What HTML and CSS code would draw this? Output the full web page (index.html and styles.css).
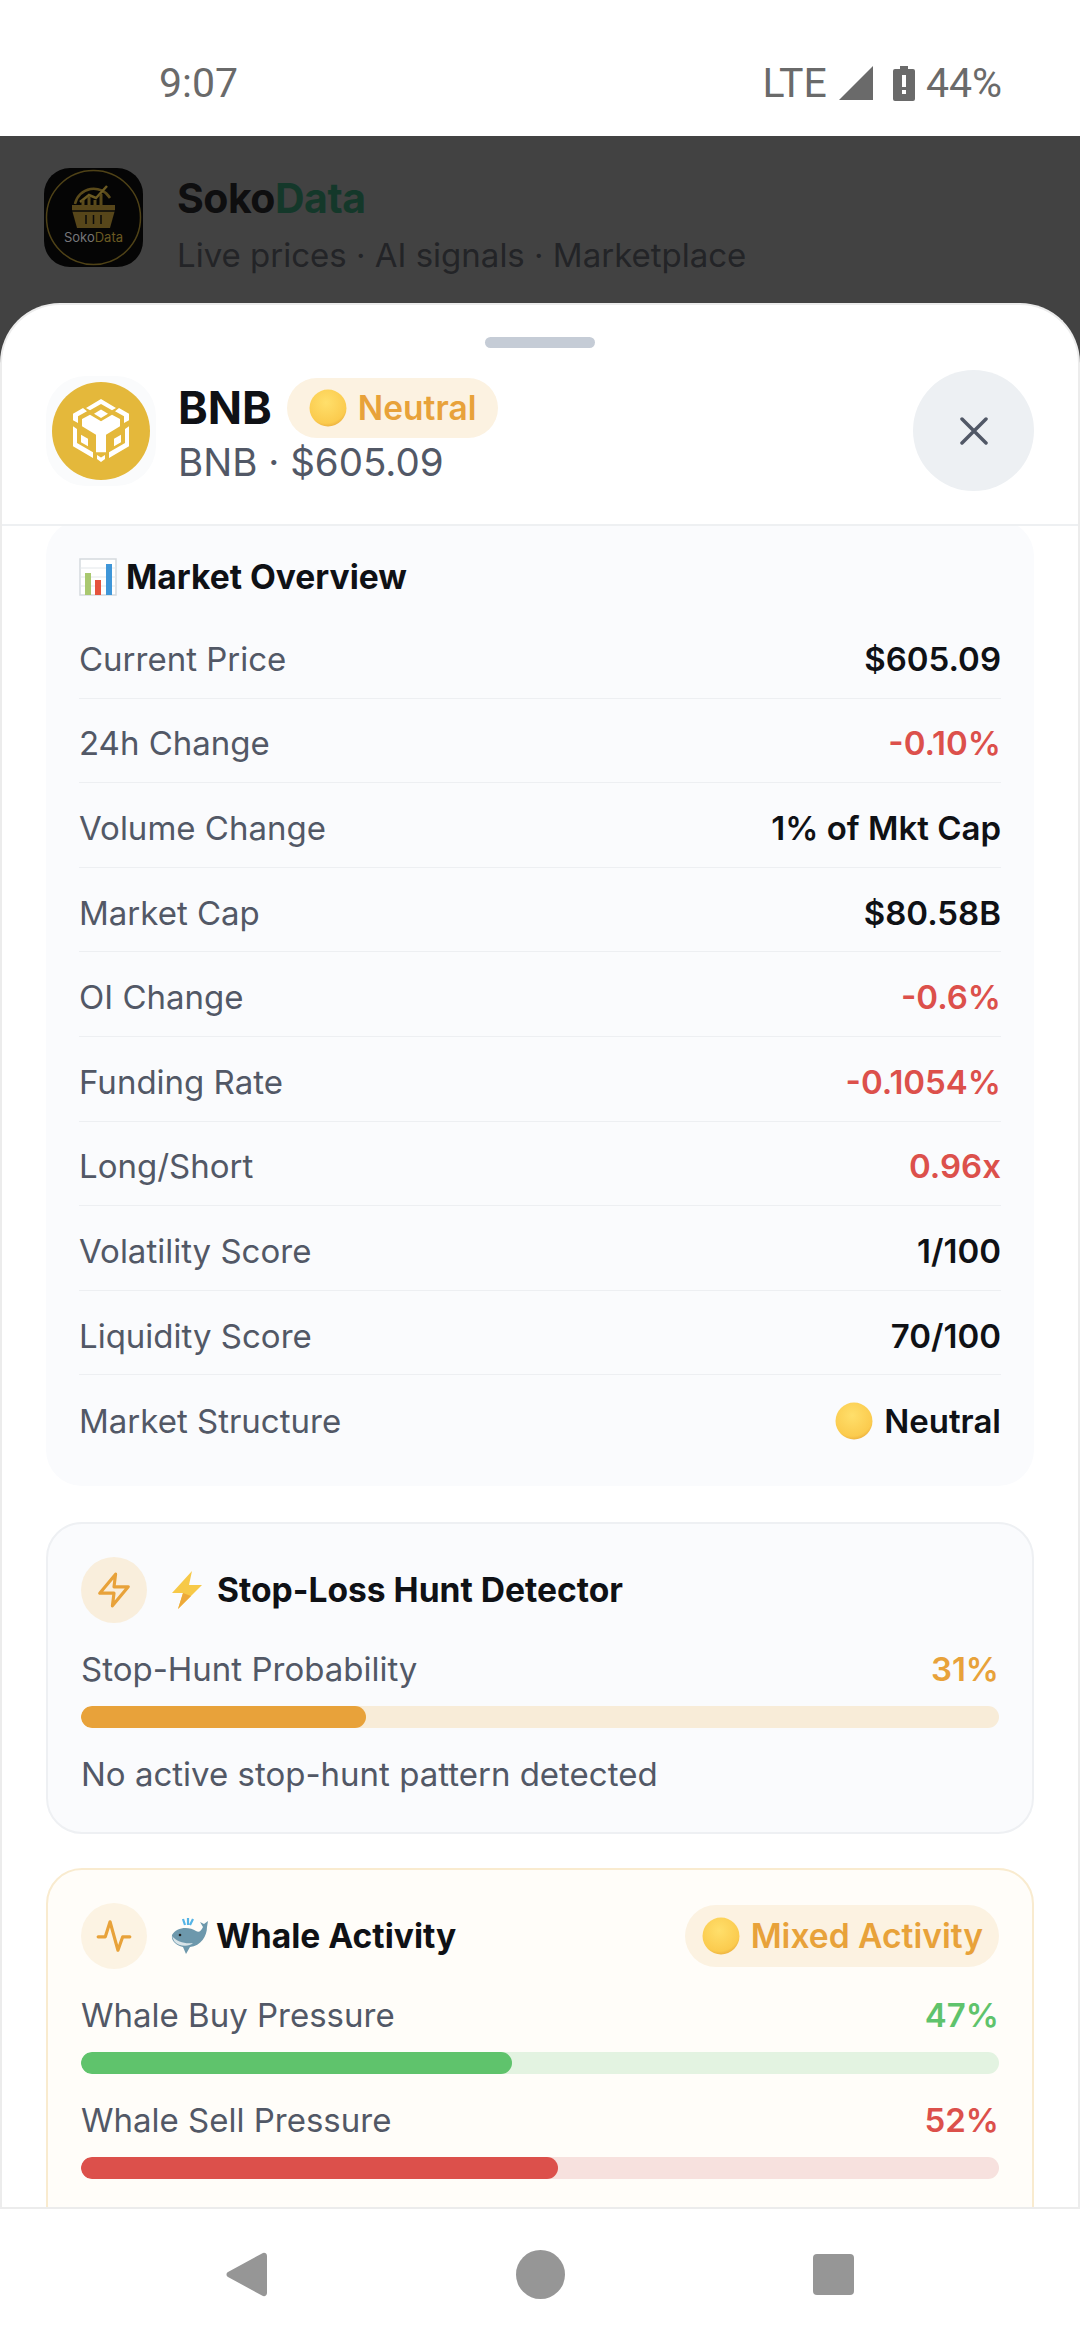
FILE: index.html
```html
<!DOCTYPE html>
<html lang="en">
<head>
    <meta charset="UTF-8">
    <meta name="viewport" content="width=device-width, initial-scale=1.0">
    <title>SokoData - BNB</title>
    <link rel="stylesheet" href="styles.css">
</head>
<body>

<svg class="defs" width="0" height="0">
    <defs>
        <radialGradient id="coinFill" cx="45%" cy="35%" r="70%">
            <stop offset="0" stop-color="#ffdf6b"/>
            <stop offset="0.8" stop-color="#fbcb4e"/>
            <stop offset="1" stop-color="#e8a93a"/>
        </radialGradient>
        <symbol id="yellowDot" viewBox="0 0 36 36">
            <circle cx="18" cy="18" r="17.5" fill="url(#coinFill)"/>
        </symbol>
    </defs>
</svg>

<div class="screen">

    <div class="status-bar">
        <span>9:07</span>
        <div class="status-right">
            <span>LTE</span>
            <svg class="signal" viewBox="0 0 34 34"><path d="M34 0V34H0Z"/></svg>
            <svg class="battery" viewBox="0 0 22 35"><path fill-rule="evenodd" d="M7 0H15V3H20A2 2 0 0 1 22 5V33A2 2 0 0 1 20 35H2A2 2 0 0 1 0 33V5A2 2 0 0 1 2 3H7ZM9 9V21H13V9ZM9 24V28H13V24Z"/></svg>
            <span>44%</span>
        </div>
    </div>

    <div class="backdrop">
        <div class="app-header">
            <svg class="app-logo" viewBox="0 0 99 99">
                <rect width="99" height="99" rx="26" fill="#050505"/>
                <circle cx="49.5" cy="49.5" r="47" fill="none" stroke="#4f4217" stroke-width="1.5"/>
                <path d="M31 36A19 19 0 0 1 66 30" fill="none" stroke="#5a4a1a" stroke-width="2.5"/>
                <path d="M36 34L45 27L52 30L63 18" fill="none" stroke="#6b5a22" stroke-width="2.5"/>
                <path d="M39 37V32M45 37V29M51 37V32M57 37V26" stroke="#5a4a1a" stroke-width="3"/>
                <path d="M28 37H71V42L66 60H33L28 42Z" fill="#57461a"/>
                <path d="M28 43H71M42 47V56M49.5 47V56M57 47V56" stroke="#0a0a0a" stroke-width="1.5"/>
                <text x="49.5" y="74" text-anchor="middle" class="logo-text">Soko<tspan fill="#6b5a22">Data</tspan></text>
            </svg>
            <div>
                <div class="app-title">Soko<span class="app-title-accent">Data</span></div>
                <div class="app-subtitle">Live prices · AI signals · Marketplace</div>
            </div>
        </div>

        <div class="sheet">
            <div class="sheet-top">
                <div class="handle"></div>
                <div class="coin-row">
                    <div class="coin-frame">
                        <svg class="coin" viewBox="0 0 98 98">
                            <circle cx="49" cy="49" r="49" fill="#e4b83b"/>
                            <g fill="#fff">
                                <path d="M49 17L64 26L60 28.3L49 22L38 28.3L34 26Z"/>
                                <path d="M49 27.5L56 31.7L49 36L42 31.7Z"/>
                                <path d="M21 31.7L31 26L35 29.3L26 34.3V41L21 38.3Z"/>
                                <path d="M77 31.7L67 26L63 29.3L72 34.3V41L77 38.3Z"/>
                                <path d="M30 37L38 32.7L49 39.3L60 32.7L68 37V44.3L54 52.7V70.3H44V52.7L30 44.3Z"/>
                                <path d="M21 44.3L25 47V61L41 70.3V76L21 64.3Z"/>
                                <path d="M77 44.3L73 47V61L57 70.3V76L77 64.3Z"/>
                                <path d="M29 52.7L36 56.7V64.3L29 60.3Z"/>
                                <path d="M69 52.7L62 56.7V64.3L69 60.3Z"/>
                                <path d="M45 73L49 75.5L53 73V77L49 80L45 77Z"/>
                            </g>
                        </svg>
                    </div>
                    <div class="coin-text">
                        <div class="coin-name-row">
                            <span class="coin-name">BNB</span>
                            <span class="pill pill-neutral"><svg class="dot"><use href="#yellowDot"/></svg>Neutral</span>
                        </div>
                        <div class="coin-sub">BNB · $605.09</div>
                    </div>
                    <button class="close-btn">
                        <svg viewBox="0 0 28 28"><path d="M2 2L26 26M26 2L2 26"/></svg>
                    </button>
                </div>
            </div>

            <div class="sheet-body">
                <section class="overview">
                    <h2 class="overview-title">
                        <svg class="emoji" viewBox="0 0 38 38">
                            <rect x="1" y="1" width="36" height="36" fill="#fff" stroke="#d5dade" stroke-width="1.5"/>
                            <path d="M1 10H37M1 19H37M1 28H37" stroke="#e3e7ea" stroke-width="1"/>
                            <rect x="6" y="15" width="6" height="22" fill="#a9c86f"/>
                            <rect x="16" y="22" width="6" height="15" fill="#e5533d"/>
                            <rect x="27" y="6" width="6" height="31" fill="#3f96d8"/>
                        </svg>
                        Market Overview
                    </h2>
                    <div class="row"><span>Current Price</span><b>$605.09</b></div>
                    <div class="row"><span>24h Change</span><b class="red">-0.10%</b></div>
                    <div class="row"><span>Volume Change</span><b>1% of Mkt Cap</b></div>
                    <div class="row"><span>Market Cap</span><b>$80.58B</b></div>
                    <div class="row"><span>OI Change</span><b class="red">-0.6%</b></div>
                    <div class="row"><span>Funding Rate</span><b class="red">-0.1054%</b></div>
                    <div class="row"><span>Long/Short</span><b class="red">0.96x</b></div>
                    <div class="row"><span>Volatility Score</span><b>1/100</b></div>
                    <div class="row"><span>Liquidity Score</span><b>70/100</b></div>
                    <div class="row"><span>Market Structure</span><b class="with-dot"><svg class="dot"><use href="#yellowDot"/></svg>Neutral</b></div>
                </section>

                <section class="card card-detector">
                    <div class="card-head">
                        <span class="icon-circle">
                            <svg viewBox="0 0 24 24"><path d="M13 2L3 14H12L11 22L21 10H12Z"/></svg>
                        </span>
                        <h2 class="card-title">
                            <svg class="emoji-bolt" viewBox="0 0 32 38"><path d="M21 0L1 22L12 22L7 38L31 14H18Z" fill="#f7c948"/><path d="M12 22L7 38L20 25Z" fill="#eda93a"/></svg>
                            Stop-Loss Hunt Detector
                        </h2>
                    </div>
                    <div class="meter-label"><span>Stop-Hunt Probability</span><b class="orange">31%</b></div>
                    <div class="bar bar-orange"><div class="fill" style="width: 31%"></div></div>
                    <p class="card-note">No active stop-hunt pattern detected</p>
                </section>

                <section class="card card-warm">
                    <div class="card-head">
                        <span class="icon-circle">
                            <svg viewBox="0 0 24 24"><path d="M2 12.5H6.5L9.5 3L14.5 21L17.5 12.5H22"/></svg>
                        </span>
                        <h2 class="card-title">
                            <svg class="emoji-whale" viewBox="0 0 38 36">
                                <path d="M12 1L14 7M17 0V7M22 1L19 7" stroke="#55b4e6" stroke-width="2.2" fill="none"/>
                                <path d="M1 17C5 9 18 8 25 13C28 15 30 13 32 9L29 4L33 6L37 3L36 9C36 18 30 28 19 29L15 36L12 29C5 27 0 23 1 17Z" fill="#6d98ac"/>
                                <path d="M1 18C6 24 14 26 22 25C18 29 8 29 3 23Z" fill="#d9e4e8"/>
                                <circle cx="9" cy="17" r="1.3" fill="#222"/>
                            </svg>
                            Whale Activity
                        </h2>
                        <span class="pill pill-mixed"><svg class="dot"><use href="#yellowDot"/></svg>Mixed Activity</span>
                    </div>
                    <div class="meter-label"><span>Whale Buy Pressure</span><b class="green">47%</b></div>
                    <div class="bar bar-green"><div class="fill" style="width: 47%"></div></div>
                    <div class="meter-label second"><span>Whale Sell Pressure</span><b class="red">52%</b></div>
                    <div class="bar bar-red"><div class="fill" style="width: 52%"></div></div>
                </section>
            </div>
        </div>
    </div>

    <div class="nav-bar">
        <svg class="nav-back" viewBox="0 0 41 45"><path d="M36 1.5C38 0 41 1 41 4V41C41 44 38 45 36 43.5L2 25C0 24 0 21 2 20Z"/></svg>
        <svg class="nav-home" viewBox="0 0 49 49"><circle cx="24.5" cy="24.5" r="24.5"/></svg>
        <svg class="nav-recent" viewBox="0 0 41 41"><rect width="41" height="41" rx="4"/></svg>
    </div>

</div>

</body>
</html>
```

FILE: styles.css
```css
* {
    box-sizing: border-box;
}

body {
    margin: 0;
    font-family: Inter, "Noto Sans", sans-serif;
    background-color: #fff;
}

h2, p {
    margin: 0;
}

.defs {
    display: block;
}

.screen {
    width: 1080px;
    height: 2340px;
    display: flex;
    flex-direction: column;
    overflow: hidden;
}

/* status bar */
.status-bar {
    height: 136px;
    padding: 30px 78px 0 159px;
    display: flex;
    align-items: center;
    justify-content: space-between;
    font-family: Roboto, sans-serif;
    font-size: 41px;
    color: #6a6a6a;
    flex-shrink: 0;
}

.status-right {
    display: flex;
    align-items: center;
}

.signal {
    width: 34px;
    height: 34px;
    margin-left: 12px;
    fill: #6a6a6a;
}

.battery {
    width: 22px;
    height: 35px;
    margin: 0 11px 0 20px;
    fill: #6a6a6a;
}

/* dimmed page behind the sheet */
.backdrop {
    flex: 1;
    min-height: 0;
    display: flex;
    flex-direction: column;
    background-color: #424242;
}

.app-header {
    height: 167px;
    padding: 32px 44px 0;
    display: flex;
    gap: 34px;
    flex-shrink: 0;
}

.app-logo {
    width: 99px;
    height: 99px;
}

.logo-text {
    font-family: Inter, sans-serif;
    font-size: 13px;
    fill: #77777a;
}

.app-title {
    font-size: 41px;
    font-weight: 700;
    line-height: 48px;
    letter-spacing: -0.5px;
    color: #0e0e0f;
    margin-top: 6px;
}

.app-title-accent {
    color: #14382a;
}

.app-subtitle {
    font-size: 33px;
    line-height: 40px;
    margin-top: 13px;
    color: #232427;
}

/* bottom sheet */
.sheet {
    flex: 1;
    min-height: 0;
    display: flex;
    flex-direction: column;
    background-color: #fff;
    border: 2px solid #ececec;
    border-bottom: 0;
    border-radius: 60px 60px 0 0;
    overflow: hidden;
}

.sheet-top {
    height: 221px;
    padding: 32px 44px 0;
    border-bottom: 2px solid #eef0f2;
    flex-shrink: 0;
}

.handle {
    width: 110px;
    height: 11px;
    margin: 0 auto;
    border-radius: 6px;
    background-color: #c5ccd6;
}

.coin-row {
    display: flex;
    align-items: center;
    margin-top: 22px;
}

.coin-frame {
    width: 110px;
    height: 110px;
    margin-top: 1px;
    display: flex;
    align-items: center;
    justify-content: center;
    border-radius: 40px;
    background-color: #fafbfc;
}

.coin {
    width: 98px;
    height: 98px;
}

.coin-text {
    margin-left: 22px;
    flex: 1;
}

.coin-name-row {
    display: flex;
    align-items: center;
    gap: 15px;
}

.coin-name {
    font-size: 45px;
    font-weight: 700;
    color: #0f1115;
}

.coin-sub {
    font-size: 38.5px;
    line-height: 44px;
    margin-top: 2px;
    color: #525866;
}

.pill {
    display: flex;
    align-items: center;
    font-weight: 600;
    color: #e8a23a;
    background-color: #fcf2e1;
    border-radius: 31px;
}

.pill-neutral {
    height: 60px;
    padding: 0 22px;
    font-size: 33.5px;
}

.pill-mixed {
    height: 62px;
    padding: 0 16px 0 17px;
    margin-left: auto;
    font-size: 33.6px;
}

.dot {
    width: 38px;
    height: 38px;
    margin-right: 11px;
    flex-shrink: 0;
}

.close-btn {
    width: 121px;
    height: 121px;
    padding: 0;
    border: 0;
    border-radius: 50%;
    background-color: #edf0f3;
    display: flex;
    align-items: center;
    justify-content: center;
}

.close-btn svg {
    width: 28px;
    height: 28px;
    fill: none;
    stroke: #515866;
    stroke-width: 3.5;
    stroke-linecap: round;
}

.sheet-body {
    flex: 1;
    min-height: 0;
    padding: 0 44px;
    overflow: hidden;
}

/* market overview */
.overview {
    margin-top: -6px;
    padding: 19px 33px 26px;
    background-color: #fafbfd;
    border-radius: 36px;
}

.overview-title {
    height: 75px;
    display: flex;
    align-items: center;
    gap: 9px;
    font-size: 33.6px;
    font-weight: 700;
    color: #0f1115;
}

.emoji {
    width: 38px;
    height: 38px;
}

.row {
    height: 84.6px;
    padding-top: 6px;
    display: flex;
    align-items: center;
    justify-content: space-between;
    font-size: 33px;
    color: #525866;
    border-bottom: 1px solid #edeff2;
}

.row:last-child {
    border-bottom: 0;
}

.row b {
    font-weight: 600;
    color: #0f1115;
}

.row .red {
    color: #dc504b;
}

.with-dot {
    display: flex;
    align-items: center;
}

/* detector cards */
.card {
    margin-top: 36px;
    padding: 33px 33px 30px;
    background-color: #fafbfd;
    border: 2px solid #eef0f3;
    border-radius: 36px;
}

.card-detector {
    padding-bottom: 38px;
}

/* runs on below the nav bar, its bottom edge is never in view */
.card-warm {
    margin-top: 34px;
    padding-bottom: 80px;
    background-color: #fffdf9;
    border-color: #f9ebcf;
}

.card-head {
    display: flex;
    align-items: center;
    gap: 24px;
}

.icon-circle {
    width: 66px;
    height: 66px;
    display: flex;
    align-items: center;
    justify-content: center;
    border-radius: 50%;
    background-color: #f9eedc;
    flex-shrink: 0;
}

.card-warm .icon-circle {
    background-color: #fcf3e3;
}

.icon-circle svg {
    width: 38px;
    height: 38px;
    fill: none;
    stroke: #e8a23a;
    stroke-width: 2;
    stroke-linecap: round;
    stroke-linejoin: round;
}

.card-title {
    display: flex;
    align-items: center;
    gap: 6px;
    font-size: 33.6px;
    font-weight: 700;
    color: #0f1115;
}

.emoji-bolt {
    width: 32px;
    height: 38px;
    margin-right: 8px;
}

.emoji-whale {
    width: 38px;
    height: 36px;
    margin-right: 1px;
}

.meter-label {
    display: flex;
    justify-content: space-between;
    align-items: center;
    height: 40px;
    margin-top: 26px;
    font-size: 33px;
    color: #525866;
}

.meter-label.second {
    margin-top: 26px;
}

.meter-label b {
    font-weight: 600;
}

.orange {
    color: #e8a23a;
}

.green {
    color: #5fc36c;
}

.red {
    color: #dc504b;
}

.bar {
    height: 22px;
    margin-top: 17px;
    border-radius: 11px;
    overflow: hidden;
}

.fill {
    height: 100%;
    border-radius: 11px;
}

.bar-orange {
    background-color: #f8ecd8;
}

.bar-orange .fill {
    background-color: #e8a23a;
}

.bar-green {
    background-color: #e3f3e1;
}

.bar-green .fill {
    background-color: #5fc36c;
}

.bar-red {
    background-color: #f7e1de;
}

.bar-red .fill {
    background-color: #dc504b;
}

.card-note {
    font-size: 33px;
    line-height: 40px;
    margin-top: 26px;
    color: #525866;
}

/* android nav */
.nav-bar {
    height: 133px;
    flex-shrink: 0;
    border-top: 2px solid #ececec;
    background-color: #fff;
    display: flex;
    align-items: center;
    padding-left: 226px;
}

.nav-bar svg {
    fill: #969696;
}

.nav-back {
    width: 41px;
    height: 45px;
}

.nav-home {
    width: 49px;
    height: 49px;
    margin-left: 249px;
}

.nav-recent {
    width: 41px;
    height: 41px;
    margin-left: 248px;
}
```
